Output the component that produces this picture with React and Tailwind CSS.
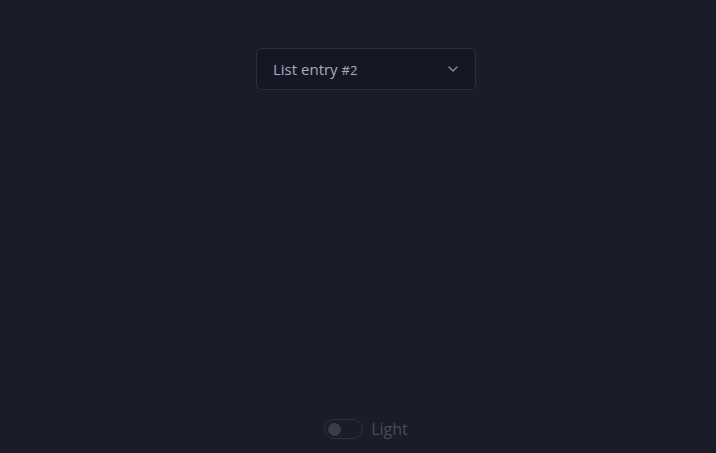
import { ChevronDown } from "lucide-react";

export default function App() {
  return (
    <div
      className="h-screen w-full bg-[#1a1c28] flex flex-col items-center justify-between pt-12 pb-[12px] pl-4"
      style={{ fontFamily: '"Open Sans", "Noto Sans", sans-serif' }}
    >
      <button className="w-[220px] h-[42px] flex items-center justify-between pl-4 pr-[14px] rounded-md border border-[#2c303e] bg-[#151823] text-[#a6abc2] text-[15px]">
        <span>
          List entry <span className="text-[13px]">#2</span>
        </span>
        <ChevronDown size={16} strokeWidth={2.4} className="text-[#7d8299]" />
      </button>

      <div className="flex items-center gap-2">
        <div className="w-[39px] h-[20px] rounded-full border border-[#2e3141] flex items-center px-[3px]">
          <div className="w-[13px] h-[13px] rounded-full bg-[#3a3d4f]" />
        </div>
        <span className="text-[16px] text-[#484b5d]">Light</span>
      </div>
    </div>
  );
}
